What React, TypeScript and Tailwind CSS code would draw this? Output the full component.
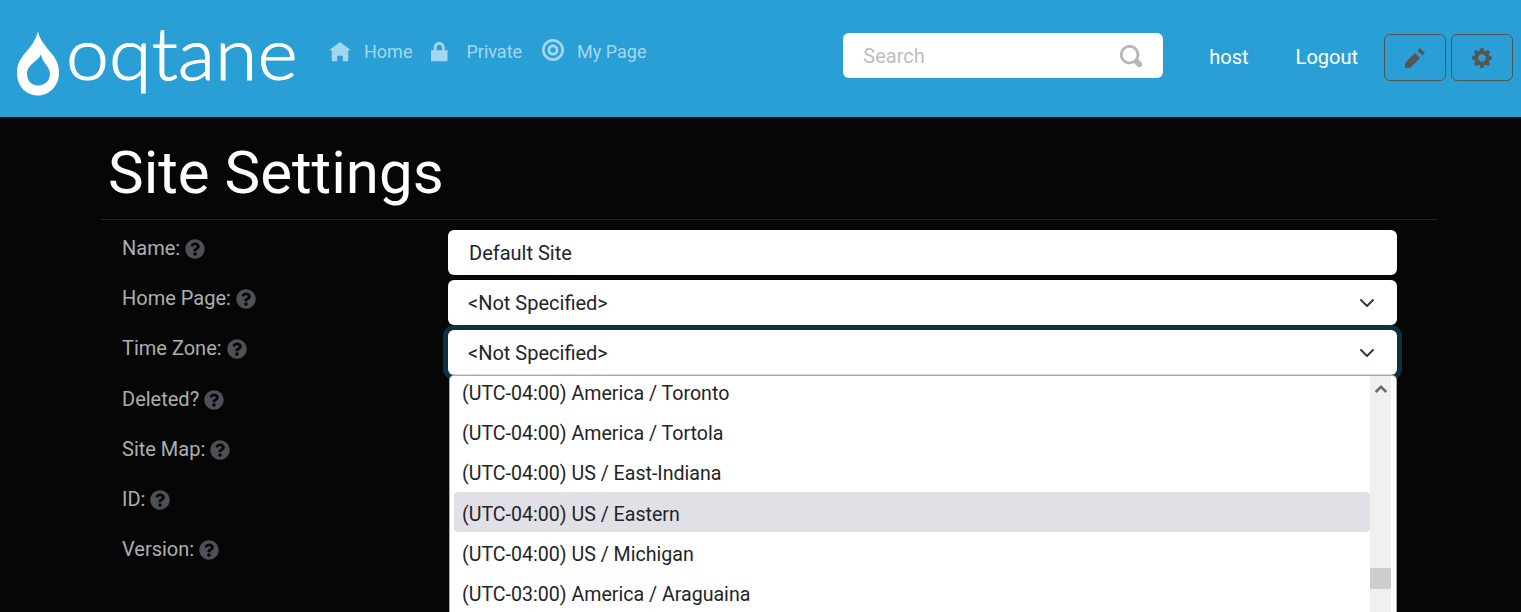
import { FaQuestionCircle } from "react-icons/fa";

const P = {
  home: "M4 0l-4 3h1v4h2v-2h2v2h2v-4.030l1 .030-4-3z",
  lock: "M3 0c-1.100 0-2 .900-2 2v1h-1v4h6v-4h-1v-1c0-1.100-.900-2-2-2zm0 1c.560 0 1 .440 1 1v1h-2v-1c0-.560.440-1 1-1z",
  target: "M4 0c-2.200 0-4 1.800-4 4s1.800 4 4 4 4-1.800 4-4-1.800-4-4-4zm0 1c1.670 0 3 1.330 3 3s-1.330 3-3 3-3-1.330-3-3 1.330-3 3-3zm0 1c-1.110 0-2 .890-2 2 0 1.110.890 2 2 2 1.110 0 2-.890 2-2 0-1.110-.890-2-2-2zm0 1c-.55 0-1 .45-1 1s.45 1 1 1 1-.45 1-1-.45-1-1-1z",
  pencil: "M6 0l-1 1 2 2 1-1-2-2zm-2 2l-4 4v2h2l4-4-2-2z",
  cog: "M3.500 0l-.5 1.190c-.100.030-.19.080-.28.130l-1.190-.5-.72.720.5 1.190c-.050.100-.090.180-.13.280l-1.190.5v1l1.190.5c.040.100.080.180.13.280l-.5 1.190.72.720 1.190-.5c.090.040.18.090.28.130l.5 1.190h1l.5-1.190c.090-.040.19-.080.28-.13l1.190.5.72-.72-.5-1.190c.040-.090.090-.19.130-.28l1.190-.5v-1l-1.190-.5c-.030-.090-.080-.19-.13-.28l.5-1.190-.72-.72-1.190.5c-.090-.040-.19-.090-.28-.13l-.5-1.190h-1zm.5 2.500c.830 0 1.500.670 1.500 1.500s-.670 1.500-1.500 1.500-1.500-.670-1.500-1.500.670-1.500 1.500-1.500z",
  search: "M3.500 0c-1.930 0-3.500 1.570-3.500 3.500s1.570 3.500 3.500 3.500c.590 0 1.170-.140 1.660-.410a1 1 0 0 0 .130.130l1 1a1.020 1.020 0 1 0 1.440-1.440l-1-1a1 1 0 0 0-.160-.130c.270-.490.440-1.060.440-1.660 0-1.930-1.570-3.500-3.500-3.500zm0 1c1.390 0 2.500 1.110 2.500 2.500 0 .660-.240 1.270-.660 1.720-.010.010-.020.020-.030.030a1 1 0 0 0-.130.130c-.44.400-1.040.630-1.690.630-1.390 0-2.500-1.110-2.500-2.500s1.110-2.500 2.500-2.500z",
};

function Icon({ d, className }: { d: string; className: string }) {
  return (
    <svg viewBox="0 0 8 8" fill="currentColor" fillRule="evenodd" className={className}>
      <path d={d} />
    </svg>
  );
}

function Chevron() {
  return (
    <svg viewBox="0 0 16 16" fill="none" stroke="#343a40" strokeWidth="2" strokeLinecap="round" strokeLinejoin="round" className="w-4 h-4 mr-[2px]">
      <path d="M2 5l6 6 6-6" />
    </svg>
  );
}

function NavItem({ d, label, iconClass }: { d: string; label: string; iconClass: string }) {
  return (
    <div className="flex items-center gap-[13px]">
      <Icon d={d} className={iconClass} />
      <span>{label}</span>
    </div>
  );
}

const labels = ["Name:", "Home Page:", "Time Zone:", "Deleted?", "Site Map:", "ID:", "Version:"];
const options = [
  "(UTC-04:00) America / Toronto",
  "(UTC-04:00) America / Tortola",
  "(UTC-04:00) US / East-Indiana",
  "(UTC-04:00) US / Eastern",
  "(UTC-04:00) US / Michigan",
  "(UTC-03:00) America / Araguaina",
];

export default function App() {
  return (
    <div className="h-[612px] overflow-hidden bg-[#060606] font-['Roboto',sans-serif] text-[20px]">
      <header className="h-[117px] bg-[#2a9fd6] flex items-start">
        <div className="w-[329px] shrink-0 pl-[16px] pt-[30px] flex items-start text-white">
          <svg viewBox="0 0 44 66" className="w-[44px] h-[66px] shrink-0" fill="white">
            <path fillRule="evenodd" d="M22 1.500C23.500 9 28 14 33 20.500C39 27 43 33 43 43C43 56 33 65.500 22 65.500C10 65.500 1 56 1 43C1 33 5 28 10 22C14 17.500 19.500 11 22 1.500ZM25 24C24 30 11 34 11 44C11 51 16 55.500 22 55.500C29 55.500 34 50.500 34 44C34 36 26 33 25 24Z" />
          </svg>
          <span className="block ml-[6px] mt-[-10px] w-[226px] text-[72px] leading-[64px] font-['Lato',sans-serif] font-light [-webkit-text-stroke:1px_white] origin-left scale-x-[1.07] whitespace-nowrap">
            oqtane
          </span>
        </div>
        <nav className="flex items-center pt-[37px] text-[#a3d7f0] text-[18px] leading-[30px]">
          <NavItem d={P.home} label="Home" iconClass="w-[22px] h-[22px] mt-[2px]" />
          <div className="w-[19px]" />
          <NavItem d={P.lock} label="Private" iconClass="w-[22px] h-[22px] mt-[2px]" />
          <div className="w-[20px]" />
          <NavItem d={P.target} label="My Page" iconClass="w-[22px] h-[22px] mt-[-4px]" />
        </nav>
        <div className="ml-auto flex items-start pt-[33px] pr-[8px]">
          <div className="w-[320px] h-[45px] bg-white rounded-[6px] flex items-center justify-between pl-[20px] pr-[21px] text-[#bdbdbd]">
            <span className="mt-[1px]">Search</span>
            <Icon d={P.search} className="w-[22px] h-[22px] text-[#b5b5b5]" />
          </div>
          <span className="ml-[46px] leading-[49px] text-white">host</span>
          <span className="ml-[47px] leading-[49px] text-white">Logout</span>
          <div className="ml-[26px] mt-[1px] w-[62px] h-[47px] border border-[#555] rounded-[6px] flex items-center justify-center text-[#555]">
            <Icon d={P.pencil} className="w-[20px] h-[20px]" />
          </div>
          <div className="ml-[5px] mt-[1px] w-[62px] h-[47px] border border-[#555] rounded-[6px] flex items-center justify-center text-[#555]">
            <Icon d={P.cog} className="w-[20px] h-[20px]" />
          </div>
        </div>
      </header>
      <main className="px-[84px]">
        <div className="h-[103px] border-b border-[#222] pl-[7px] ml-[17px] -mb-px">
          <h1 className="text-[60px] leading-[112px] text-white">Site Settings</h1>
        </div>
        <div className="flex pt-[11px] pl-[38px] pr-[40px]">
          <div className="w-[326px] shrink-0 text-[#adafae] mt-[-0.5px]">
            {labels.map((l) => (
              <div key={l} className="flex items-center gap-[5px] h-[50.3px] pb-[14px]">
                <span>{l}</span>
                <FaQuestionCircle className="w-[20px] h-[20px] text-[#4d5057] mt-[2px]" />
              </div>
            ))}
          </div>
          <div className="flex-1 flex flex-col gap-[5px] relative text-[#212529]">
            <div className="h-[45px] bg-white rounded-[6px] flex items-center px-[21px] pt-[1px]">Default Site</div>
            <div className="h-[45px] bg-white rounded-[6px] flex items-center justify-between px-[20px] pt-[1px]">
              <span>&lt;Not Specified&gt;</span>
              <Chevron />
            </div>
            <div className="h-[45px] bg-white rounded-[6px] flex items-center justify-between px-[20px] pt-[1px] shadow-[0_0_0_5px_#10303f]">
              <span>&lt;Not Specified&gt;</span>
              <Chevron />
            </div>
            <div className="absolute left-[1px] right-0 top-[145px] h-[300px] bg-white border border-[#a8a8a8] border-b-0 rounded-t-[5px] shadow-[0_-1px_1px_rgba(0,0,0,0.15)] flex overflow-hidden">
              <div className="flex-1 pl-[4px] mt-[-5px] overflow-hidden">
                {options.map((o, i) => (
                  <div
                    key={o}
                    className={`h-[40.25px] flex items-center pl-[8px] pt-[5px] rounded-[4px] text-[19.6px] text-[#212529] ${i === 3 ? "bg-[#e1e0e6]" : ""}`}
                  >
                    {o}
                  </div>
                ))}
              </div>
              <div className="w-[21px] shrink-0 mr-[5px] bg-[#f0f0f0] relative flex justify-center pt-[8px]">
                <svg viewBox="0 0 16 10" className="w-[14px] h-[9px]" fill="none" stroke="#6b6b6b" strokeWidth="3">
                  <path d="M2 9l6-6 6 6" />
                </svg>
                <div className="absolute left-0 right-0 top-[192px] h-[21px] bg-[#cdcdcd]" />
              </div>
            </div>
          </div>
        </div>
      </main>
    </div>
  );
}
